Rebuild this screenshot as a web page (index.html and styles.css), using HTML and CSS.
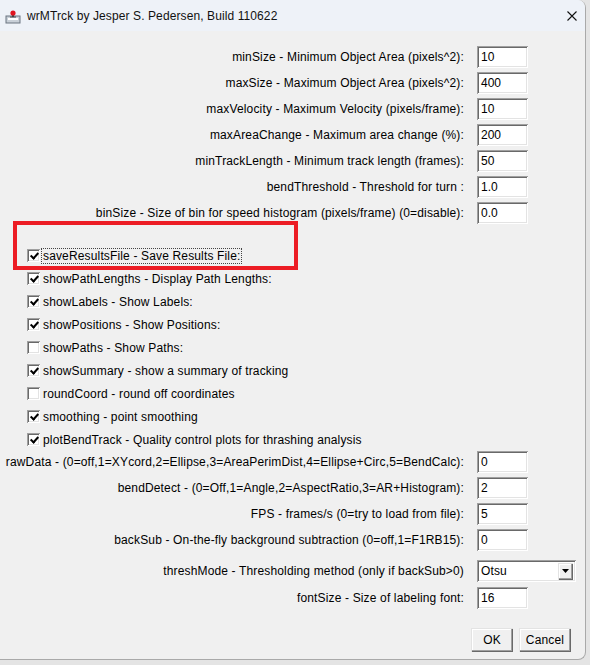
FILE: index.html
```html
<!DOCTYPE html>
<html>
<head>
<meta charset="utf-8">
<title>wrMTrck</title>
<link rel="stylesheet" href="styles.css">
</head>
<body>
<div class="window">
  <div class="titlebar">
    <svg class="app-icon" viewBox="0 0 16 16" width="16" height="16">
      <rect x="1" y="8" width="14" height="7" fill="#c9d0d8" stroke="#6b7480" stroke-width="1"/>
      <rect x="3" y="10" width="10" height="2" fill="#ffffff"/>
      <path d="M8 3 L8 9" stroke="#222" stroke-width="1.5"/>
      <path d="M5 9 L11 9" stroke="#444" stroke-width="1"/>
      <circle cx="8" cy="5" r="2.6" fill="#e0141e"/>
    </svg>
    <span class="title">wrMTrck by Jesper S. Pedersen, Build 110622</span>
    <svg class="close" viewBox="0 0 10 10" width="10" height="10">
      <path d="M0.5 0.5 L9.5 9.5 M9.5 0.5 L0.5 9.5" stroke="#111" stroke-width="1.1"/>
    </svg>
  </div>

  <div class="content">
    <div class="grid">
      <span class="label">minSize - Minimum Object Area (pixels^2):</span><div class="field">10</div>
      <span class="label">maxSize - Maximum Object Area (pixels^2):</span><div class="field">400</div>
      <span class="label">maxVelocity - Maximum Velocity (pixels/frame):</span><div class="field">10</div>
      <span class="label">maxAreaChange - Maximum area change (%):</span><div class="field">200</div>
      <span class="label">minTrackLength - Minimum track length (frames):</span><div class="field">50</div>
      <span class="label">bendThreshold - Threshold for turn :</span><div class="field">1.0</div>
      <span class="label">binSize - Size of bin for speed histogram (pixels/frame) (0=disable):</span><div class="field">0.0</div>
    </div>

    <div class="checks">
      <div class="check"><span class="box on"></span><span class="clabel focus">saveResultsFile - Save Results File:</span></div>
      <div class="check"><span class="box on"></span><span class="clabel">showPathLengths - Display Path Lengths:</span></div>
      <div class="check"><span class="box on"></span><span class="clabel">showLabels - Show Labels:</span></div>
      <div class="check"><span class="box on"></span><span class="clabel">showPositions - Show Positions:</span></div>
      <div class="check"><span class="box"></span><span class="clabel">showPaths - Show Paths:</span></div>
      <div class="check"><span class="box on"></span><span class="clabel">showSummary - show a summary of tracking</span></div>
      <div class="check"><span class="box"></span><span class="clabel">roundCoord - round off coordinates</span></div>
      <div class="check"><span class="box on"></span><span class="clabel">smoothing - point smoothing</span></div>
      <div class="check"><span class="box on"></span><span class="clabel">plotBendTrack - Quality control plots for thrashing analysis</span></div>
    </div>

    <div class="grid">
      <span class="label">rawData - (0=off,1=XYcord,2=Ellipse,3=AreaPerimDist,4=Ellipse+Circ,5=BendCalc):</span><div class="field">0</div>
      <span class="label">bendDetect - (0=Off,1=Angle,2=AspectRatio,3=AR+Histogram):</span><div class="field">2</div>
      <span class="label">FPS - frames/s (0=try to load from file):</span><div class="field">5</div>
      <span class="label">backSub - On-the-fly background subtraction (0=off,1=F1RB15):</span><div class="field">0</div>
    </div>

    <div class="grid wide thresh">
      <span class="label">threshMode - Thresholding method (only if backSub&gt;0)</span>
      <div class="select"><span class="sel-text">Otsu</span><span class="arrow"><svg viewBox="0 0 7 4" width="7" height="4"><path d="M0 0 H7 L3.5 4 Z" fill="#000"/></svg></span></div>
    </div>
    <div class="grid font">
      <span class="label">fontSize - Size of labeling font:</span><div class="field">16</div>
    </div>

    <div class="buttons">
      <div class="btn ok">OK</div>
      <div class="btn cancel">Cancel</div>
    </div>
  </div>

  <div class="highlight"></div>
</div>
</body>
</html>
```

FILE: styles.css
```css
* { box-sizing: border-box; }
html, body { margin: 0; padding: 0; }
body {
  width: 590px;
  height: 665px;
  background: #e4e4e4;
  font-family: "Liberation Sans", Arial, sans-serif;
  font-size: 12px;
  color: #000;
  overflow: hidden;
}
.window {
  position: relative;
  width: 586px;
  height: 660px;
  background: #f0f0f0;
  border-right: 1px solid #a9a9a9;
  border-bottom: 1px solid #a9a9a9;
  border-top-right-radius: 8px;
  border-bottom-right-radius: 8px;
  overflow: hidden;
}
.titlebar {
  height: 31px;
  background: #eef2f8;
  display: flex;
  align-items: center;
  padding-left: 5px;
}
.app-icon { flex: none; }
.title {
  margin-left: 6px;
  font-size: 12px;
  letter-spacing: 0.1px;
  color: #111;
}
.close {
  margin-left: auto;
  margin-right: 8px;
  flex: none;
}
.content { padding-top: 15px; }

.grid {
  display: grid;
  grid-template-columns: 464px 51px;
  column-gap: 13px;
  row-gap: 4px;
}
.grid.wide { grid-template-columns: 464px 99px; }
.label {
  text-align: right;
  align-self: center;
  white-space: nowrap;
  letter-spacing: 0.15px;
  line-height: 14px;
}
.field {
  height: 22px;
  background: #fff;
  box-shadow: inset 1px 1px #a0a0a0, inset -1px -1px #ffffff, inset 2px 2px #696969, inset -2px -2px #e3e3e3;
  padding: 4px 0 0 4px;
  line-height: 14px;
  white-space: nowrap;
}

.checks {
  margin-top: 20px;
  padding-left: 27px;
  display: flex;
  flex-direction: column;
}
.check {
  height: 23px;
  display: flex;
  align-items: center;
  gap: 3px;
}
.box {
  position: relative;
  width: 13px;
  height: 13px;
  flex: none;
  background: #fff;
  box-shadow: inset 1px 1px #a0a0a0, inset -1px -1px #ffffff, inset 2px 2px #696969, inset -2px -2px #e3e3e3;
}
.box.on::after {
  content: "";
  position: absolute;
  left: 3px;
  top: 2px;
  width: 6px;
  height: 3px;
  border-left: 2px solid #000;
  border-bottom: 2px solid #000;
  transform: translate(0.5px, 1.5px) rotate(-48deg);
}
.clabel {
  white-space: nowrap;
  letter-spacing: 0.15px;
  line-height: 14px;
}
.clabel.focus {
  border: 1px dotted #444;
  padding: 0 1px;
  margin-left: -2px;
}

.thresh { margin-top: 9px; }
.select {
  height: 22px;
  background: #fff;
  box-shadow: inset 1px 1px #a0a0a0, inset -1px -1px #ffffff, inset 2px 2px #696969, inset -2px -2px #e3e3e3;
  display: flex;
  align-items: center;
  padding: 2px 3px 2px 4px;
}
.sel-text { flex: 1; letter-spacing: 0.15px; }
.arrow {
  width: 15px;
  height: 17px;
  background: #f0f0f0;
  box-shadow: inset 1px 1px #e3e3e3, inset -1px -1px #696969, inset -2px -2px #a0a0a0, inset 2px 2px #ffffff;
  display: flex;
  align-items: center;
  justify-content: center;
}
.font { margin-top: 5px; }

.buttons {
  display: flex;
  justify-content: flex-end;
  gap: 6px;
  margin-top: 19px;
  padding-right: 14px;
}
.btn {
  height: 24px;
  display: flex;
  align-items: center;
  justify-content: center;
  background: #f0f0f0;
  box-shadow: inset 1px 1px #e3e3e3, inset -1px -1px #696969, inset -2px -2px #a0a0a0, inset 2px 2px #ffffff;
  letter-spacing: 0.15px;
}
.btn.ok { width: 42px; }
.btn.cancel { width: 52px; }

.highlight {
  position: absolute;
  left: 13px;
  top: 221px;
  width: 285px;
  height: 49px;
  border: 4px solid #ec1c24;
}
```
